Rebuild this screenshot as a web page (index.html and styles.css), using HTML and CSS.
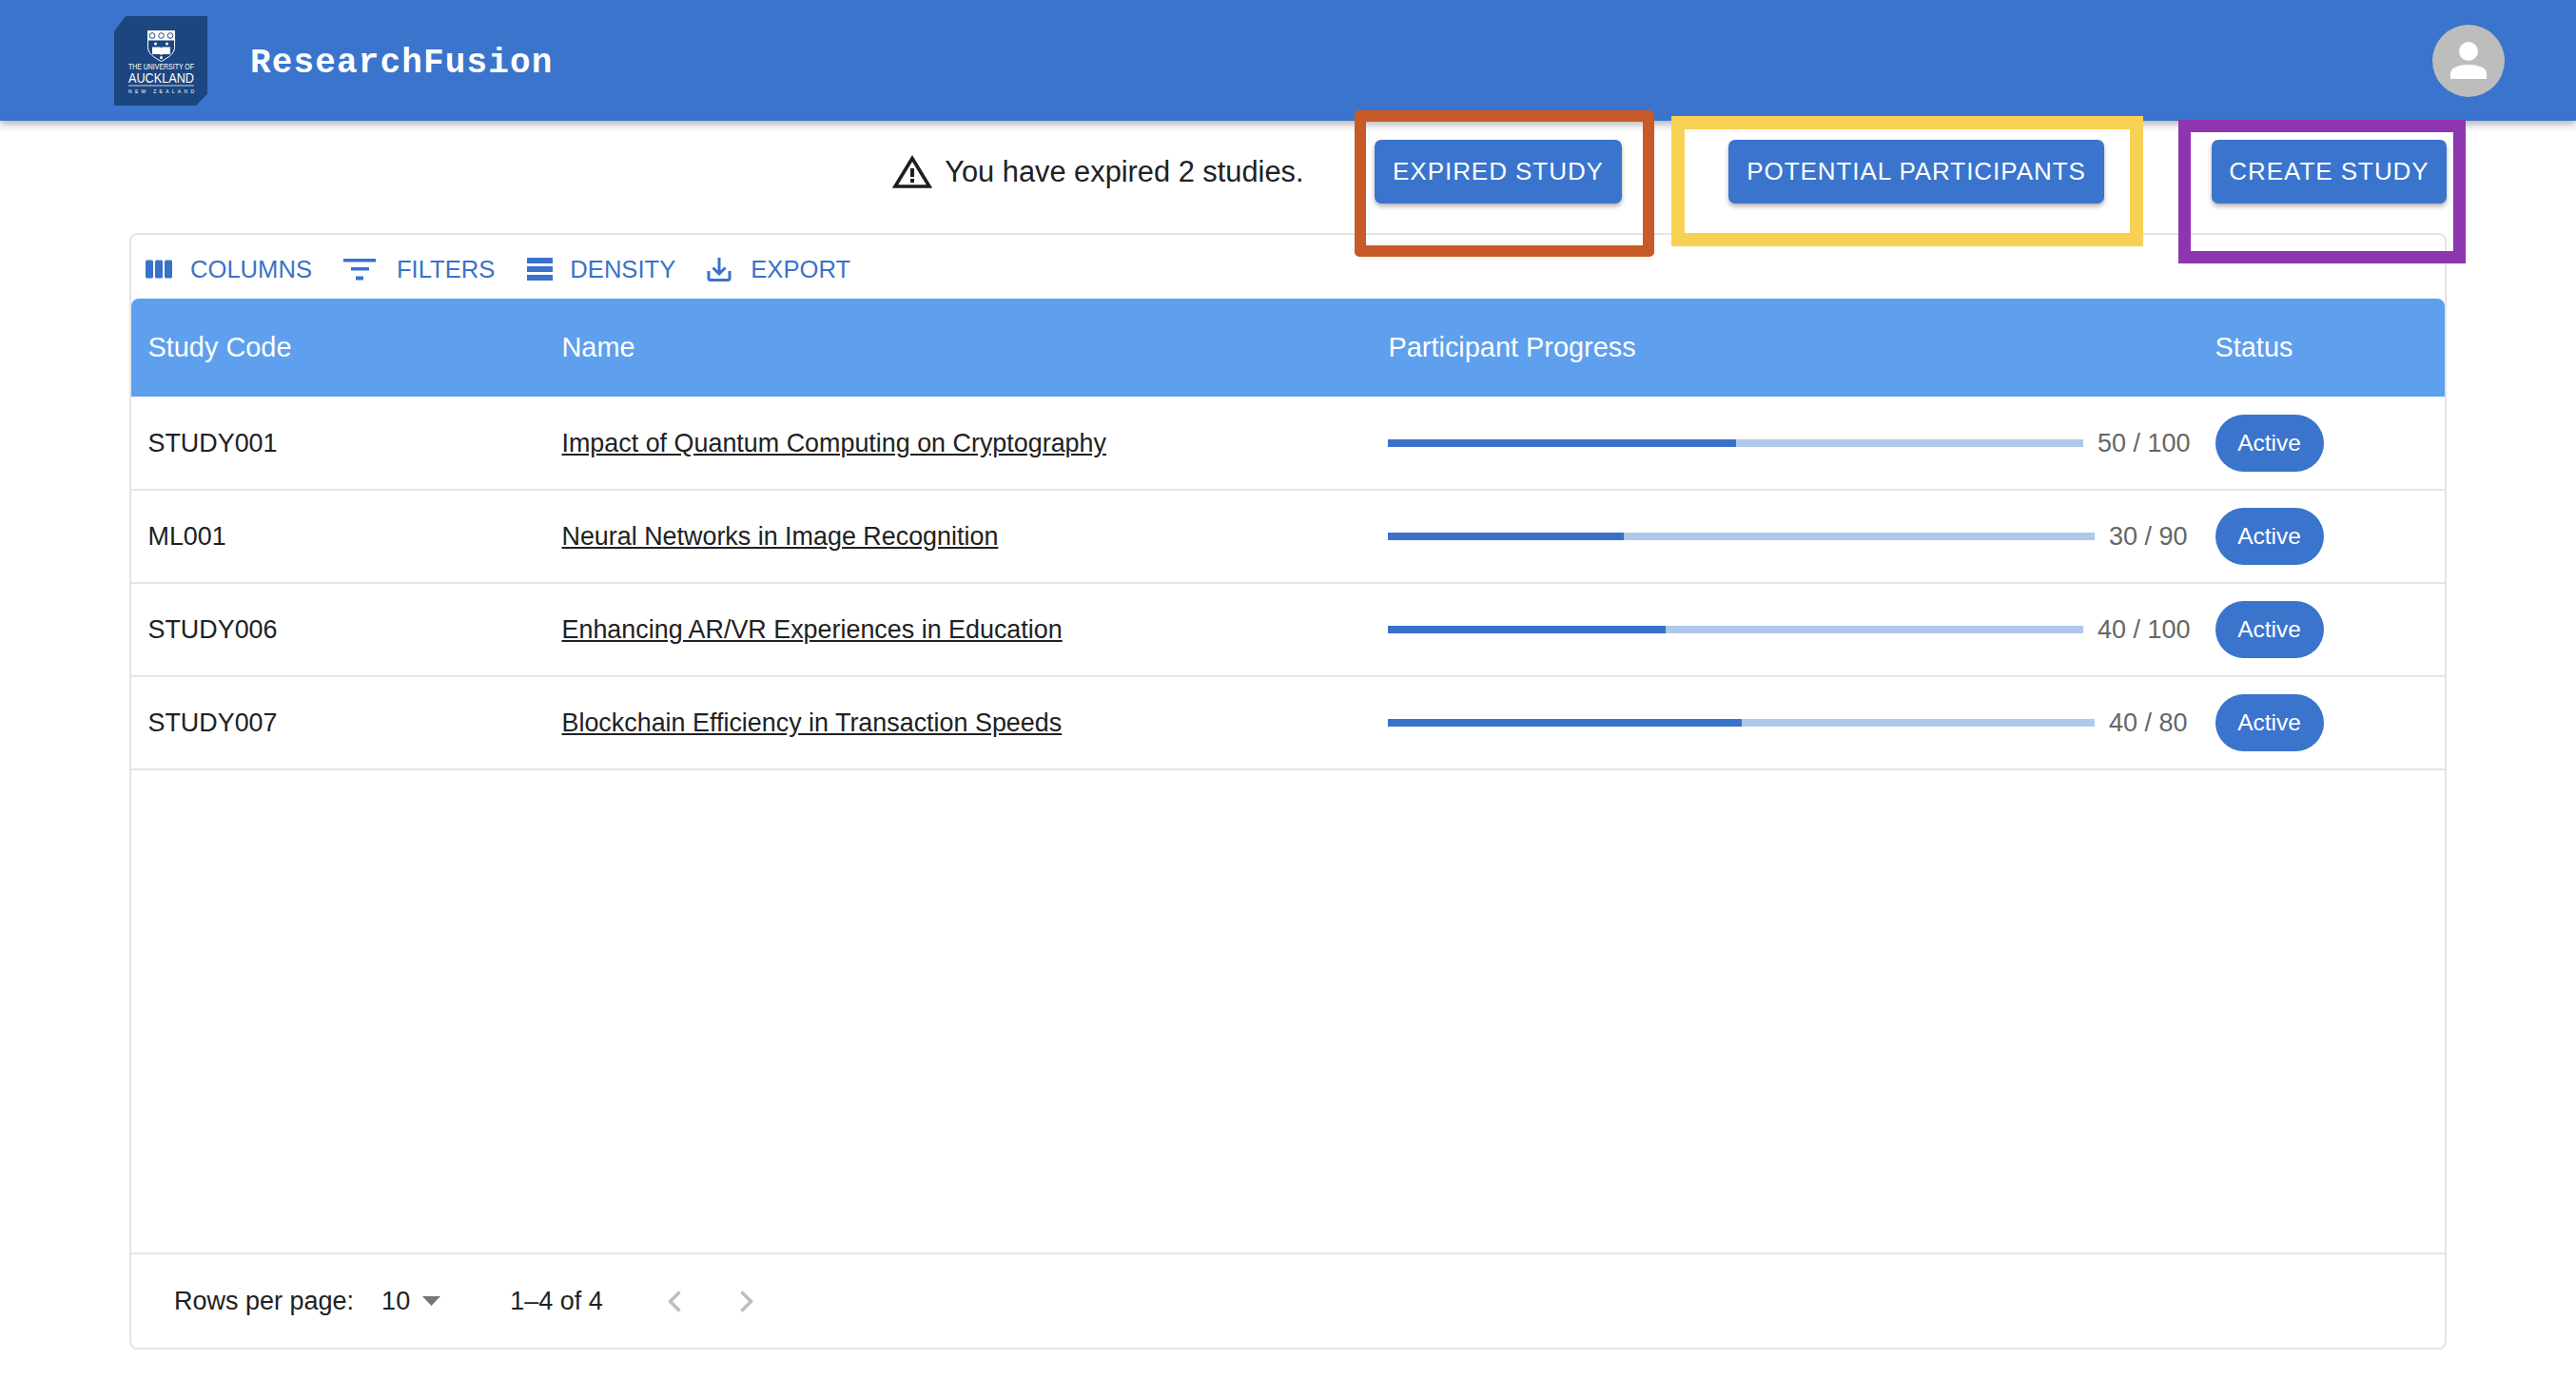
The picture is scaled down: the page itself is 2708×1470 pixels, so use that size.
FILE: index.html
```html
<!DOCTYPE html>
<html lang="en">
<head>
    <meta charset="UTF-8">
    <title>ResearchFusion</title>
    <link rel="stylesheet" href="styles.css">
</head>
<body>
    <header class="topbar">
        <svg class="logo" viewBox="0 0 98 94">
            <polygon fill="#1c4680" points="12,0 98,0 98,82 86,94 0,94 0,16"/>
            <path fill="none" stroke="#ffffff" stroke-width="1" d="M35.500 15.500h28v17c0 7-6.500 11-14 15-7.500-4-14-8-14-15z"/>
            <rect fill="#ffffff" x="35.500" y="15.500" width="28" height="10"/>
            <circle fill="none" stroke="#1c4680" stroke-width="1" cx="40" cy="20.500" r="2.800"/>
            <circle fill="none" stroke="#1c4680" stroke-width="1" cx="49.500" cy="20.500" r="2.800"/>
            <circle fill="none" stroke="#1c4680" stroke-width="1" cx="59" cy="20.500" r="2.800"/>
            <circle fill="#ffffff" cx="43.500" cy="29" r="1.500"/>
            <circle fill="#ffffff" cx="55.500" cy="29" r="1.500"/>
            <path fill="#ffffff" d="M40 32.500h8.500l1 1 1-1H59v7.500h-8l-1.500 1-1.500-1h-8z"/>
            <circle fill="#ffffff" cx="49.500" cy="43.500" r="1.500"/>
            <text class="logo-small" x="15" y="56" textLength="69" lengthAdjust="spacingAndGlyphs">THE UNIVERSITY OF</text>
            <text class="logo-big" x="15" y="70" textLength="69" lengthAdjust="spacingAndGlyphs">AUCKLAND</text>
            <rect fill="#c9d6e8" x="15" y="72.500" width="69" height="1"/>
            <text class="logo-tiny" x="15" y="81" textLength="69" lengthAdjust="spacing">NEW ZEALAND</text>
        </svg>
        <div class="brand">ResearchFusion</div>
        <div class="avatar">
            <svg width="76" height="76" viewBox="0 0 76 76">
                <circle fill="#ffffff" cx="38" cy="28" r="10"/>
                <path fill="#ffffff" d="M19 57v-6c0-6 10-9 19-9s19 3 19 9v6z"/>
            </svg>
        </div>
    </header>

    <main class="page">
        <div class="actions">
            <div class="notice">
                <svg class="warn-icon" viewBox="0 0 42 35">
                    <path fill="none" stroke="#1e1e1e" stroke-width="3.600" d="M21 3.500 3 33h36z"/>
                    <rect fill="#1e1e1e" x="19" y="14" width="4" height="9"/>
                    <rect fill="#1e1e1e" x="19" y="25" width="4" height="4"/>
                </svg>
                <span>You have expired 2 studies.</span>
            </div>
            <button class="btn btn-expired">EXPIRED STUDY</button>
            <button class="btn btn-potential">POTENTIAL PARTICIPANTS</button>
            <button class="btn">CREATE STUDY</button>
        </div>

        <section class="card">
            <div class="toolbar">
                <div class="tool tool-columns">
                    <svg width="28" height="20" viewBox="0 0 28 20">
                        <rect fill="#3a72c9" x="0" y="0.500" width="8" height="19" rx="1.500"/>
                        <rect fill="#3a72c9" x="10" y="0.500" width="8" height="19" rx="1.500"/>
                        <rect fill="#3a72c9" x="20" y="0.500" width="8" height="19" rx="1.500"/>
                    </svg>
                    COLUMNS
                </div>
                <div class="tool tool-filters">
                    <svg width="34" height="23" viewBox="0 0 34 23">
                        <rect fill="#3a72c9" x="0" y="0" width="34" height="3.500"/>
                        <rect fill="#3a72c9" x="8" y="9" width="19" height="3.500"/>
                        <rect fill="#3a72c9" x="13" y="18.500" width="8" height="4"/>
                    </svg>
                    FILTERS
                </div>
                <div class="tool tool-density">
                    <svg width="27" height="24" viewBox="0 0 27 24">
                        <rect fill="#3a72c9" x="0" y="0" width="27" height="6"/>
                        <rect fill="#3a72c9" x="0" y="9" width="27" height="6"/>
                        <rect fill="#3a72c9" x="0" y="18" width="27" height="6"/>
                    </svg>
                    DENSITY
                </div>
                <div class="tool">
                    <svg width="26" height="25" viewBox="0 0 26 25">
                        <path fill="none" stroke="#3a72c9" stroke-width="3" d="M2 14v7.500c0 1 .6 2 2 2h18c1.400 0 2-1 2-2V14"/>
                        <path fill="none" stroke="#3a72c9" stroke-width="3" d="M13 0v16M6.500 10.500 13 17l6.500-6.500"/>
                    </svg>
                    EXPORT
                </div>
            </div>

            <div class="row head">
                <div class="cell">Study Code</div>
                <div class="cell">Name</div>
                <div class="cell">Participant Progress</div>
                <div class="cell">Status</div>
            </div>

            <div class="rows">
                <div class="row">
                    <div class="cell">STUDY001</div>
                    <div class="cell"><a href="#">Impact of Quantum Computing on Cryptography</a></div>
                    <div class="cell progress">
                        <div class="bar"><div class="bar-fill" style="width: 50%"></div></div>
                        <span class="count">50 / 100</span>
                    </div>
                    <div class="cell"><span class="chip">Active</span></div>
                </div>
                <div class="row">
                    <div class="cell">ML001</div>
                    <div class="cell"><a href="#">Neural Networks in Image Recognition</a></div>
                    <div class="cell progress">
                        <div class="bar bar-long"><div class="bar-fill" style="width: 33.33%"></div></div>
                        <span class="count">30 / 90</span>
                    </div>
                    <div class="cell"><span class="chip">Active</span></div>
                </div>
                <div class="row">
                    <div class="cell">STUDY006</div>
                    <div class="cell"><a href="#">Enhancing AR/VR Experiences in Education</a></div>
                    <div class="cell progress">
                        <div class="bar"><div class="bar-fill" style="width: 40%"></div></div>
                        <span class="count">40 / 100</span>
                    </div>
                    <div class="cell"><span class="chip">Active</span></div>
                </div>
                <div class="row">
                    <div class="cell">STUDY007</div>
                    <div class="cell"><a href="#">Blockchain Efficiency in Transaction Speeds</a></div>
                    <div class="cell progress">
                        <div class="bar bar-long"><div class="bar-fill" style="width: 50%"></div></div>
                        <span class="count">40 / 80</span>
                    </div>
                    <div class="cell"><span class="chip">Active</span></div>
                </div>
            </div>

            <div class="pager">
                <span class="pager-label">Rows per page:</span>
                <span class="pager-size">10</span>
                <svg class="pager-caret" width="19" height="10" viewBox="0 0 19 10">
                    <polygon fill="#757575" points="0,0 19,0 9.500,10"/>
                </svg>
                <span class="pager-range">1–4 of 4</span>
                <svg class="pager-prev" width="14" height="23" viewBox="0 0 14 23">
                    <path fill="none" stroke="#bdbdbd" stroke-width="3.500" d="M12.500 1.500 2.500 11.500l10 10"/>
                </svg>
                <svg class="pager-next" width="14" height="23" viewBox="0 0 14 23">
                    <path fill="none" stroke="#bdbdbd" stroke-width="3.500" d="M1.500 1.500l10 10-10 10"/>
                </svg>
            </div>
        </section>
    </main>

    <!-- highlight boxes drawn over the page -->
    <div class="mark mark-orange"></div>
    <div class="mark mark-yellow"></div>
    <div class="mark mark-purple"></div>
</body>
</html>
```

FILE: styles.css
```css
* {
    box-sizing: border-box;
}
html, body {
    margin: 0;
    height: 1470px;
    overflow: hidden;
}
body {
    font-family: "Liberation Sans", Arial, sans-serif;
    color: #212121;
    background: #ffffff;
    position: relative;
}

/* top bar */
.topbar {
    height: 127px;
    background: #3a74cd;
    display: flex;
    align-items: center;
    padding: 0 75px 0 120px;
    box-shadow: 0 3px 9px rgba(0, 0, 0, 0.35);
    position: relative;
}
.logo {
    width: 98px;
    height: 94px;
}
.logo text {
    fill: #ffffff;
    font-family: "Liberation Sans", Arial, sans-serif;
}
.logo-small {
    font-size: 8.300px;
}
.logo-big {
    font-size: 14.400px;
}
.logo-tiny {
    font-size: 5px;
}
.brand {
    margin-left: 45px;
    margin-top: 5px;
    font-family: "Liberation Mono", "Courier New", monospace;
    font-weight: bold;
    font-size: 36px;
    letter-spacing: 1.150px;
    color: #ffffff;
}
.avatar {
    margin-left: auto;
    width: 76px;
    height: 76px;
    border-radius: 50%;
    background: #bdbdbd;
}
.avatar svg {
    display: block;
}

/* buttons row */
.page {
    padding-left: 136px;
    width: 2572px;
}
.actions {
    height: 118px;
    padding: 20px 0 31px;
    display: flex;
    justify-content: flex-end;
    align-items: stretch;
}
.notice {
    display: flex;
    align-items: center;
    gap: 13px;
    font-size: 30.800px;
    margin-right: 74.500px;
}
.warn-icon {
    width: 42px;
    height: 35px;
}
.btn {
    width: 247px;
    border: none;
    border-radius: 7px;
    background: #3a74cd;
    color: #ffffff;
    font-family: "Liberation Sans", Arial, sans-serif;
    font-size: 26px;
    letter-spacing: 0.950px;
    box-shadow: 0 3px 5px rgba(0, 0, 0, 0.3);
    padding: 0;
}
.btn-expired {
    width: 260px;
    margin-right: 112px;
}
.btn-potential {
    width: 395px;
    margin-right: 113px;
}

/* data grid */
.card {
    height: 1174px;
    border: 2px solid #e4e4e4;
    border-radius: 8px;
    display: flex;
    flex-direction: column;
}
.toolbar {
    height: 67px;
    display: flex;
    align-items: center;
    padding: 5px 0 0 15px;
    color: #3a72c9;
    font-size: 25.600px;
}
.tool {
    display: flex;
    align-items: center;
    gap: 20px;
}
.tool-columns {
    gap: 19px;
    margin-right: 33px;
}
.tool-filters {
    margin-right: 34px;
    gap: 22px;
}
.tool-density {
    gap: 18px;
    margin-right: 33px;
}
.row {
    display: grid;
    grid-template-columns: 435px 869px 869px 1fr;
    height: 98px;
    align-items: center;
    border-bottom: 2px solid #e4e4e4;
    font-size: 26.900px;
}
.head {
    height: 103px;
    background: #5e9fee;
    color: #ffffff;
    font-size: 28.900px;
    border-bottom: none;
    border-radius: 8px 8px 0 0;
}
.cell {
    padding-left: 17.500px;
}
.cell a {
    color: #212121;
}
.rows {
    flex: 1;
    padding-top: 1px;
}

/* progress column */
.progress {
    display: flex;
    align-items: center;
    padding-left: 17px;
}
.bar {
    width: 731px;
    height: 8px;
    background: #b0c9ea;
    margin-right: 15px;
}
.bar-long {
    width: 743px;
}
.bar-fill {
    height: 100%;
    background: #3a72c9;
}
.count {
    color: #666666;
    font-size: 27px;
    white-space: nowrap;
}
.chip {
    display: flex;
    align-items: center;
    justify-content: center;
    width: 114px;
    height: 60px;
    border-radius: 30px;
    background: #3a74cd;
    color: #ffffff;
    font-size: 24.500px;
}

/* footer */
.pager {
    height: 100px;
    border-top: 2px solid #e4e4e4;
    display: flex;
    align-items: center;
    padding-left: 45px;
    font-size: 27px;
}
.pager-label {
    margin-right: 29px;
}
.pager-size {
    margin-right: 13px;
}
.pager-range {
    margin-left: 73px;
    margin-right: 68px;
}
.pager-prev {
    margin-right: 62px;
}

/* highlight boxes */
.mark {
    position: absolute;
}
.mark-orange {
    left: 1424px;
    top: 116px;
    width: 315px;
    height: 154px;
    border: 12px solid #c85a27;
    border-radius: 5px;
}
.mark-yellow {
    left: 1757px;
    top: 122px;
    width: 496px;
    height: 137px;
    border: 14px solid #f8d053;
}
.mark-purple {
    left: 2290px;
    top: 126px;
    width: 302px;
    height: 151px;
    border: 13px solid #8e35b0;
}
```
